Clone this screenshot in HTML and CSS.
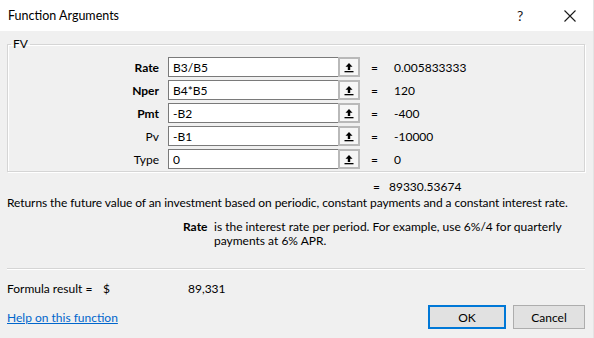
FILE: index.html
```html
<!DOCTYPE html>
<html>
<head>
<link rel="stylesheet" href="styles.css">
	<title>Function Arguments</title>
	<meta name="viewport" content="width=device-width, initial-scale=1">
</head>
<body>
	<div class="titleBar">
		<span class="titleText">Function Arguments</span>
		<span class="titleHelp">?</span>
		<span class="titleClose">
			<svg width="12" height="12" viewBox="0 0 12 12">
				<path d="M0.5 0.5 L11.5 11.5 M11.5 0.5 L0.5 11.5" stroke="#1a1a1a" stroke-width="1.1" fill="none"/>
			</svg>
		</span>
	</div>

	<div class="dialogBody">
		<fieldset class="argGroup">
			<legend>FV</legend>

			<div class="argRow">
				<label class="argName required">Rate</label>
				<div class="argField">
					<input type="text" value="B3/B5" class="argInput focused">
					<button class="refButton"><svg width="10" height="11" viewBox="0 0 10 11"><path d="M5 1 L1.5 4.8 L3.8 4.8 L3.8 8 L6.2 8 L6.2 4.8 L8.5 4.8 Z" fill="#000"/><rect x="0.5" y="9" width="9" height="1.3" fill="#000"/></svg></button>
				</div>
				<span class="argEq">=</span>
				<span class="argValue">0.005833333</span>
			</div>

			<div class="argRow">
				<label class="argName required">Nper</label>
				<div class="argField">
					<input type="text" value="B4*B5" class="argInput">
					<button class="refButton"><svg width="10" height="11" viewBox="0 0 10 11"><path d="M5 1 L1.5 4.8 L3.8 4.8 L3.8 8 L6.2 8 L6.2 4.8 L8.5 4.8 Z" fill="#000"/><rect x="0.5" y="9" width="9" height="1.3" fill="#000"/></svg></button>
				</div>
				<span class="argEq">=</span>
				<span class="argValue">120</span>
			</div>

			<div class="argRow">
				<label class="argName required">Pmt</label>
				<div class="argField">
					<input type="text" value="-B2" class="argInput">
					<button class="refButton"><svg width="10" height="11" viewBox="0 0 10 11"><path d="M5 1 L1.5 4.8 L3.8 4.8 L3.8 8 L6.2 8 L6.2 4.8 L8.5 4.8 Z" fill="#000"/><rect x="0.5" y="9" width="9" height="1.3" fill="#000"/></svg></button>
				</div>
				<span class="argEq">=</span>
				<span class="argValue">-400</span>
			</div>

			<div class="argRow">
				<label class="argName">Pv</label>
				<div class="argField">
					<input type="text" value="-B1" class="argInput">
					<button class="refButton"><svg width="10" height="11" viewBox="0 0 10 11"><path d="M5 1 L1.5 4.8 L3.8 4.8 L3.8 8 L6.2 8 L6.2 4.8 L8.5 4.8 Z" fill="#000"/><rect x="0.5" y="9" width="9" height="1.3" fill="#000"/></svg></button>
				</div>
				<span class="argEq">=</span>
				<span class="argValue">-10000</span>
			</div>

			<div class="argRow">
				<label class="argName">Type</label>
				<div class="argField">
					<input type="text" value="0" class="argInput">
					<button class="refButton"><svg width="10" height="11" viewBox="0 0 10 11"><path d="M5 1 L1.5 4.8 L3.8 4.8 L3.8 8 L6.2 8 L6.2 4.8 L8.5 4.8 Z" fill="#000"/><rect x="0.5" y="9" width="9" height="1.3" fill="#000"/></svg></button>
				</div>
				<span class="argEq">=</span>
				<span class="argValue">0</span>
			</div>
		</fieldset>

		<div class="funcResult">
			<span class="argEq">=</span>
			<span>89330.53674</span>
		</div>

		<div class="funcDesc">Returns the future value of an investment based on periodic, constant payments and a constant interest rate.</div>

		<div class="argHelp">
			<span class="argHelpName">Rate</span>
			<span class="argHelpText">is the interest rate per period. For example, use 6%/4 for quarterly payments at 6% APR.</span>
		</div>

		<div class="separator"></div>

		<div class="formulaRow">
			<span class="formulaLabel">Formula result =</span>
			<span class="formulaSign">$</span>
			<span class="formulaValue">89,331</span>
		</div>

		<div class="footer">
			<a href="#" class="helpLink">Help on this function</a>
			<div class="footerButtons">
				<button class="dlgButton default">OK</button>
				<button class="dlgButton">Cancel</button>
			</div>
		</div>
	</div>
</body>
</html>
```

FILE: styles.css
```css
* {
	box-sizing: border-box;
}

body {
	margin: 0;
	width: 594px;
	height: 338px;
	overflow: hidden;
	background: #f0f0f0;
	font-family: "Segoe UI", Lato, "Noto Sans", sans-serif;
	font-size: 12px;
	color: #000;
	border-right: 1px solid #e4e4e4;
}

.titleBar {
	height: 31px;
	background: #fff;
	display: flex;
	align-items: center;
	padding-left: 8px;
}

.titleText {
	flex: 1;
	font-size: 12.5px;
	margin-top: -1px;
}

.titleHelp {
	width: 12px;
	margin-right: 35px;
	font-size: 14px;
	color: #1a1a1a;
}

.titleClose {
	width: 12px;
	height: 12px;
	margin-right: 17px;
	display: flex;
}

.dialogBody {
	padding: 0 8px 0 7px;
}

.argGroup {
	margin: 5px 0 0 0;
	padding: 5px 0 2px 0;
	border: 1px solid #d5d5d5;
	box-shadow: inset 1px 1px 0 #fff, 1px 1px 0 #fff;
}

.argGroup legend {
	margin-left: 3px;
	padding: 0 2px;
	line-height: 16px;
}

.argRow {
	display: grid;
	grid-template-columns: 151px 192px 16px auto;
	column-gap: 9px;
	align-items: center;
	height: 20px;
	margin-bottom: 3px;
}

.argRow:last-child {
	margin-bottom: 0;
}

.argName {
	text-align: right;
}

.argName.required {
	font-weight: 700;
}

.argField {
	display: flex;
	height: 20px;
}

.argInput {
	width: 170px;
	height: 20px;
	border: 1px solid #7a7a7a;
	border-right: none;
	background: #fff;
	font-family: inherit;
	font-size: 12px;
	padding: 0 4px;
	outline: none;
	color: #000;
}

.refButton {
	width: 22px;
	height: 20px;
	padding: 0;
	border: 2px solid #b9b9b9;
	background: #f6f6f6;
	display: flex;
	align-items: center;
	justify-content: center;
}

.argEq {
	padding-left: 1px;
	margin-left: 1px;
}

.funcResult {
	display: flex;
	gap: 9px;
	margin-top: 7px;
	padding-left: 364px;
	line-height: 16px;
}

.funcDesc {
	line-height: 16px;
	letter-spacing: -0.08px;
}

.argHelp {
	display: flex;
	margin-top: 9px;
	padding-left: 176px;
	line-height: 14px;
}

.argHelpName {
	font-weight: 700;
	width: 31px;
	flex-shrink: 0;
}

.argHelpText {
	width: 360px;
}

.separator {
	margin-top: 20px;
	height: 2px;
	border-top: 1px solid #d5d5d5;
	border-bottom: 1px solid #fff;
}

.formulaRow {
	display: flex;
	margin-top: 11px;
	line-height: 16px;
}

.formulaLabel {
	width: 96px;
}

.formulaSign {
	width: 85px;
}

.footer {
	display: flex;
	justify-content: space-between;
	align-items: center;
	margin-top: 8px;
}

.helpLink {
	color: #0066cc;
	text-decoration: underline;
}

.footerButtons {
	display: flex;
	gap: 7px;
}

.dlgButton {
	height: 24px;
	width: 72px;
	background: #e1e1e1;
	border: 1px solid #adadad;
	font-family: inherit;
	font-size: 12px;
	color: #000;
	padding: 0;
}

.dlgButton.default {
	width: 78px;
	border: 2px solid #0078d7;
}
```
